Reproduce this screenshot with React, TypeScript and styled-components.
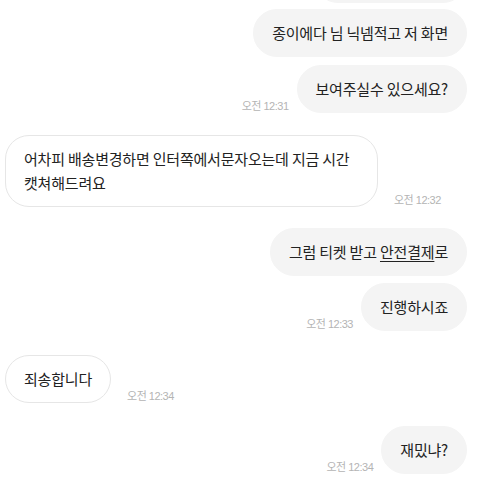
import styled, { createGlobalStyle } from "styled-components";

type Message = {
  mine: boolean;
  text: React.ReactNode;
  time?: string;
  gap: number;
};

const messages: Message[] = [
  { mine: true, text: "네 확인 부탁드려요", gap: 0 },
  { mine: true, text: "종이에다 님 닉넴적고 저 화면", gap: 6 },
  { mine: true, text: "보여주실수 있으세요?", time: "오전 12:31", gap: 8 },
  {
    mine: false,
    text: "어차피 배송변경하면 인터쪽에서문자오는데 지금 시간 캣쳐해드려요",
    time: "오전 12:32",
    gap: 22,
  },
  {
    mine: true,
    text: (
      <>
        그럼 티켓 받고 <u>안전결제</u>로
      </>
    ),
    gap: 21,
  },
  { mine: true, text: "진행하시죠", time: "오전 12:33", gap: 7 },
  { mine: false, text: "죄송합니다", time: "오전 12:34", gap: 24 },
  { mine: true, text: "재밌냐?", time: "오전 12:34", gap: 23 },
];

export default function App() {
  return (
    <>
      <GlobalStyle />
      <Viewport>
        <ChatList>
          {messages.map((m, i) => (
            <Row key={i} $mine={m.mine} $gap={m.gap}>
              {m.mine && m.time && <Time>{m.time}</Time>}
              <Bubble $mine={m.mine}>{m.text}</Bubble>
              {!m.mine && m.time && <Time>{m.time}</Time>}
            </Row>
          ))}
        </ChatList>
      </Viewport>
    </>
  );
}

const GlobalStyle = createGlobalStyle`
  html, body {
    margin: 0;
    padding: 0;
    background: #fff;
  }
  body {
    font-family: "Noto Sans CJK KR", "Noto Sans", sans-serif;
  }
`;

const Viewport = styled.div`
  width: 482px;
  height: 482px;
  overflow: hidden;
`;

const ChatList = styled.div`
  display: flex;
  flex-direction: column;
  padding: 0 15px 0 5px;
  margin-top: -45px;
`;

const Row = styled.div<{ $mine: boolean; $gap: number }>`
  display: flex;
  align-items: flex-end;
  justify-content: ${(p) => (p.$mine ? "flex-end" : "flex-start")};
  gap: ${(p) => (p.$mine ? "8px" : "16px")};
  margin-top: ${(p) => p.$gap}px;
`;

const Bubble = styled.div<{ $mine: boolean }>`
  box-sizing: border-box;
  max-width: 373px;
  padding: 11px 18px;
  border-radius: 24px;
  font-size: 15px;
  line-height: 24px;
  letter-spacing: -0.2px;
  word-break: keep-all;
  color: #222;
  background: ${(p) => (p.$mine ? "#f4f4f4" : "#fff")};
  border: 1px solid ${(p) => (p.$mine ? "#f4f4f4" : "#e6e6e6")};

  u {
    text-underline-offset: 3px;
  }
`;

const Time = styled.span`
  flex-shrink: 0;
  padding-bottom: 0;
  font-family: "Liberation Sans", "Noto Sans CJK KR", sans-serif;
  font-size: 11px;
  letter-spacing: -0.5px;
  color: #b4b4b4;
`;
